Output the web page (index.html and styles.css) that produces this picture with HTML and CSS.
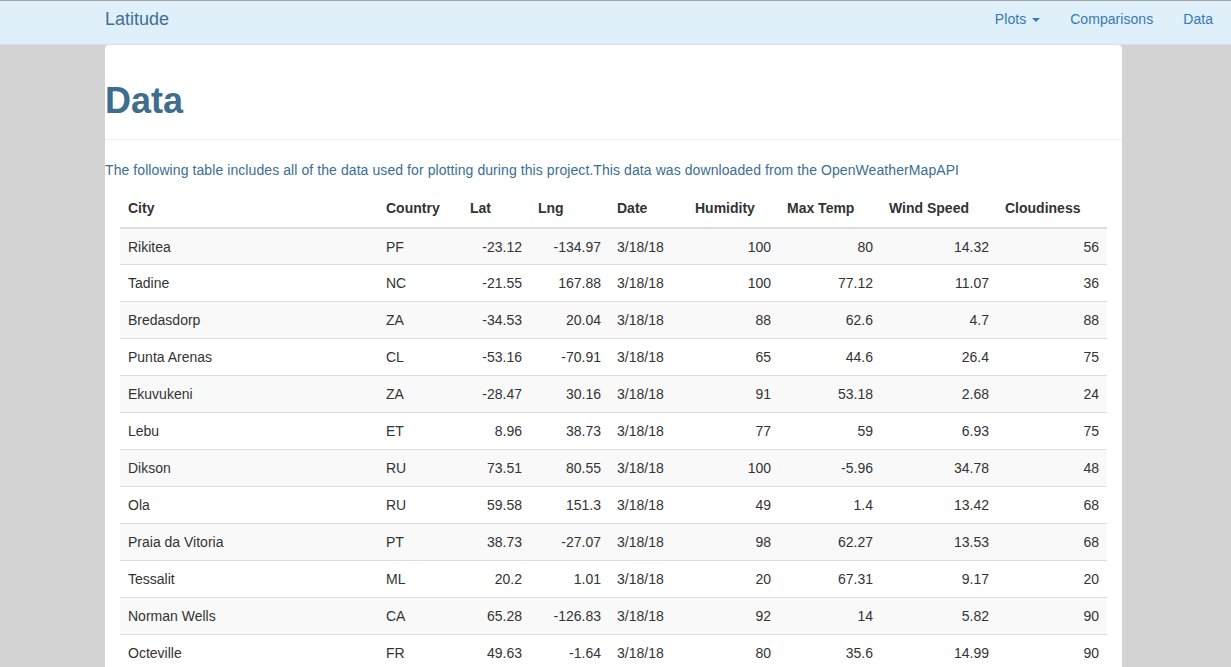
FILE: index.html
```html
<!DOCTYPE html>
<html lang="en">
<head>
<meta charset="utf-8">
<title>Latitude - Data</title>
<link rel="stylesheet" href="styles.css">
</head>
<body>
<nav class="navbar">
  <a class="brand" href="#">Latitude</a>
  <ul class="nav">
    <li><a href="#">Plots <span class="caret"></span></a></li>
    <li><a href="#">Comparisons</a></li>
    <li><a href="#">Data</a></li>
  </ul>
</nav>
<main class="page">
  <header class="page-header">
    <h1 class="title">Data</h1>
  </header>
  <p class="intro">The following table includes all of the data used for plotting during this project.This data was downloaded from the OpenWeatherMapAPI</p>
  <div class="table-wrap">
    <table class="data-table">
      <colgroup>
        <col class="c-city"><col class="c-country"><col class="c-lat"><col class="c-lng"><col class="c-date"><col class="c-hum"><col class="c-temp"><col class="c-wind"><col class="c-cloud">
      </colgroup>
      <thead>
        <tr><th>City</th><th>Country</th><th>Lat</th><th>Lng</th><th>Date</th><th>Humidity</th><th>Max Temp</th><th>Wind Speed</th><th>Cloudiness</th></tr>
      </thead>
      <tbody>
        <tr><td>Rikitea</td><td>PF</td><td class="num">-23.12</td><td class="num">-134.97</td><td>3/18/18</td><td class="num">100</td><td class="num">80</td><td class="num">14.32</td><td class="num">56</td></tr>
        <tr><td>Tadine</td><td>NC</td><td class="num">-21.55</td><td class="num">167.88</td><td>3/18/18</td><td class="num">100</td><td class="num">77.12</td><td class="num">11.07</td><td class="num">36</td></tr>
        <tr><td>Bredasdorp</td><td>ZA</td><td class="num">-34.53</td><td class="num">20.04</td><td>3/18/18</td><td class="num">88</td><td class="num">62.6</td><td class="num">4.7</td><td class="num">88</td></tr>
        <tr><td>Punta Arenas</td><td>CL</td><td class="num">-53.16</td><td class="num">-70.91</td><td>3/18/18</td><td class="num">65</td><td class="num">44.6</td><td class="num">26.4</td><td class="num">75</td></tr>
        <tr><td>Ekuvukeni</td><td>ZA</td><td class="num">-28.47</td><td class="num">30.16</td><td>3/18/18</td><td class="num">91</td><td class="num">53.18</td><td class="num">2.68</td><td class="num">24</td></tr>
        <tr><td>Lebu</td><td>ET</td><td class="num">8.96</td><td class="num">38.73</td><td>3/18/18</td><td class="num">77</td><td class="num">59</td><td class="num">6.93</td><td class="num">75</td></tr>
        <tr><td>Dikson</td><td>RU</td><td class="num">73.51</td><td class="num">80.55</td><td>3/18/18</td><td class="num">100</td><td class="num">-5.96</td><td class="num">34.78</td><td class="num">48</td></tr>
        <tr><td>Ola</td><td>RU</td><td class="num">59.58</td><td class="num">151.3</td><td>3/18/18</td><td class="num">49</td><td class="num">1.4</td><td class="num">13.42</td><td class="num">68</td></tr>
        <tr><td>Praia da Vitoria</td><td>PT</td><td class="num">38.73</td><td class="num">-27.07</td><td>3/18/18</td><td class="num">98</td><td class="num">62.27</td><td class="num">13.53</td><td class="num">68</td></tr>
        <tr><td>Tessalit</td><td>ML</td><td class="num">20.2</td><td class="num">1.01</td><td>3/18/18</td><td class="num">20</td><td class="num">67.31</td><td class="num">9.17</td><td class="num">20</td></tr>
        <tr><td>Norman Wells</td><td>CA</td><td class="num">65.28</td><td class="num">-126.83</td><td>3/18/18</td><td class="num">92</td><td class="num">14</td><td class="num">5.82</td><td class="num">90</td></tr>
        <tr><td>Octeville</td><td>FR</td><td class="num">49.63</td><td class="num">-1.64</td><td>3/18/18</td><td class="num">80</td><td class="num">35.6</td><td class="num">14.99</td><td class="num">90</td></tr>
        <tr><td>Hermanus</td><td>ZA</td><td class="num">-34.42</td><td class="num">19.24</td><td>3/18/18</td><td class="num">84</td><td class="num">62.18</td><td class="num">8.41</td><td class="num">0</td></tr>
      </tbody>
    </table>
  </div>
</main>
</body>
</html>
```

FILE: styles.css
```css
html, body {
  margin: 0;
  padding: 0;
}
body {
  background: #d3d3d3;
  font-family: "Liberation Sans", Arial, Helvetica, sans-serif;
  font-size: 14px;
  line-height: 20px;
  color: #333;
}
a {
  text-decoration: none;
}
.navbar {
  display: flex;
  justify-content: space-between;
  align-items: flex-start;
  height: 43px;
  background: #dff0fa;
  border-top: 1px solid #a4a4a4;
  border-bottom: 1px solid #d2e2ec;
  padding-left: 105px;
}
.brand {
  font-size: 18px;
  line-height: 20px;
  padding-top: 8px;
  color: #3f6f93;
}
.nav {
  display: flex;
  list-style: none;
  margin: 0;
  padding: 0 3px 0 0;
}
.nav a {
  display: block;
  padding: 8px 15px;
  color: #337ab7;
  letter-spacing: 0.05px;
}
.caret {
  display: inline-block;
  width: 0;
  height: 0;
  margin-left: 2px;
  vertical-align: middle;
  border-top: 4px solid #337ab7;
  border-left: 4px solid transparent;
  border-right: 4px solid transparent;
}
.page {
  width: 1017px;
  margin-left: 105px;
  background: #fff;
  border-radius: 4px 4px 0 0;
  min-height: 700px;
}
.page-header {
  padding-top: 34px;
  padding-bottom: 17px;
  border-bottom: 1px solid #eee;
}
.title {
  margin: 0;
  font-size: 36px;
  line-height: 43px;
  font-weight: bold;
  color: #3e6d8d;
}
.intro {
  margin: 20px 0 10px;
  color: #3a6e94;
  letter-spacing: 0.08px;
}
.table-wrap {
  padding: 0 15px;
}
.data-table {
  width: 987px;
  table-layout: fixed;
  border-collapse: collapse;
  border-spacing: 0;
}
.c-city { width: 258px; }
.c-country { width: 84px; }
.c-lat { width: 68px; }
.c-lng { width: 79px; }
.c-date { width: 78px; }
.c-hum { width: 92px; }
.c-temp { width: 102px; }
.c-wind { width: 116px; }
.c-cloud { width: 110px; }
.data-table th,
.data-table td {
  padding: 8px;
  text-align: left;
  white-space: nowrap;
}
.data-table th {
  font-weight: bold;
  padding-bottom: 9px;
  border-bottom: 2px solid #ddd;
}
.data-table td {
  border-top: 1px solid #ddd;
}
.data-table tbody tr:first-child td {
  padding-bottom: 7px;
}
.data-table td.num {
  text-align: right;
}
.data-table tbody tr:nth-child(odd) {
  background: #f9f9f9;
}
```
